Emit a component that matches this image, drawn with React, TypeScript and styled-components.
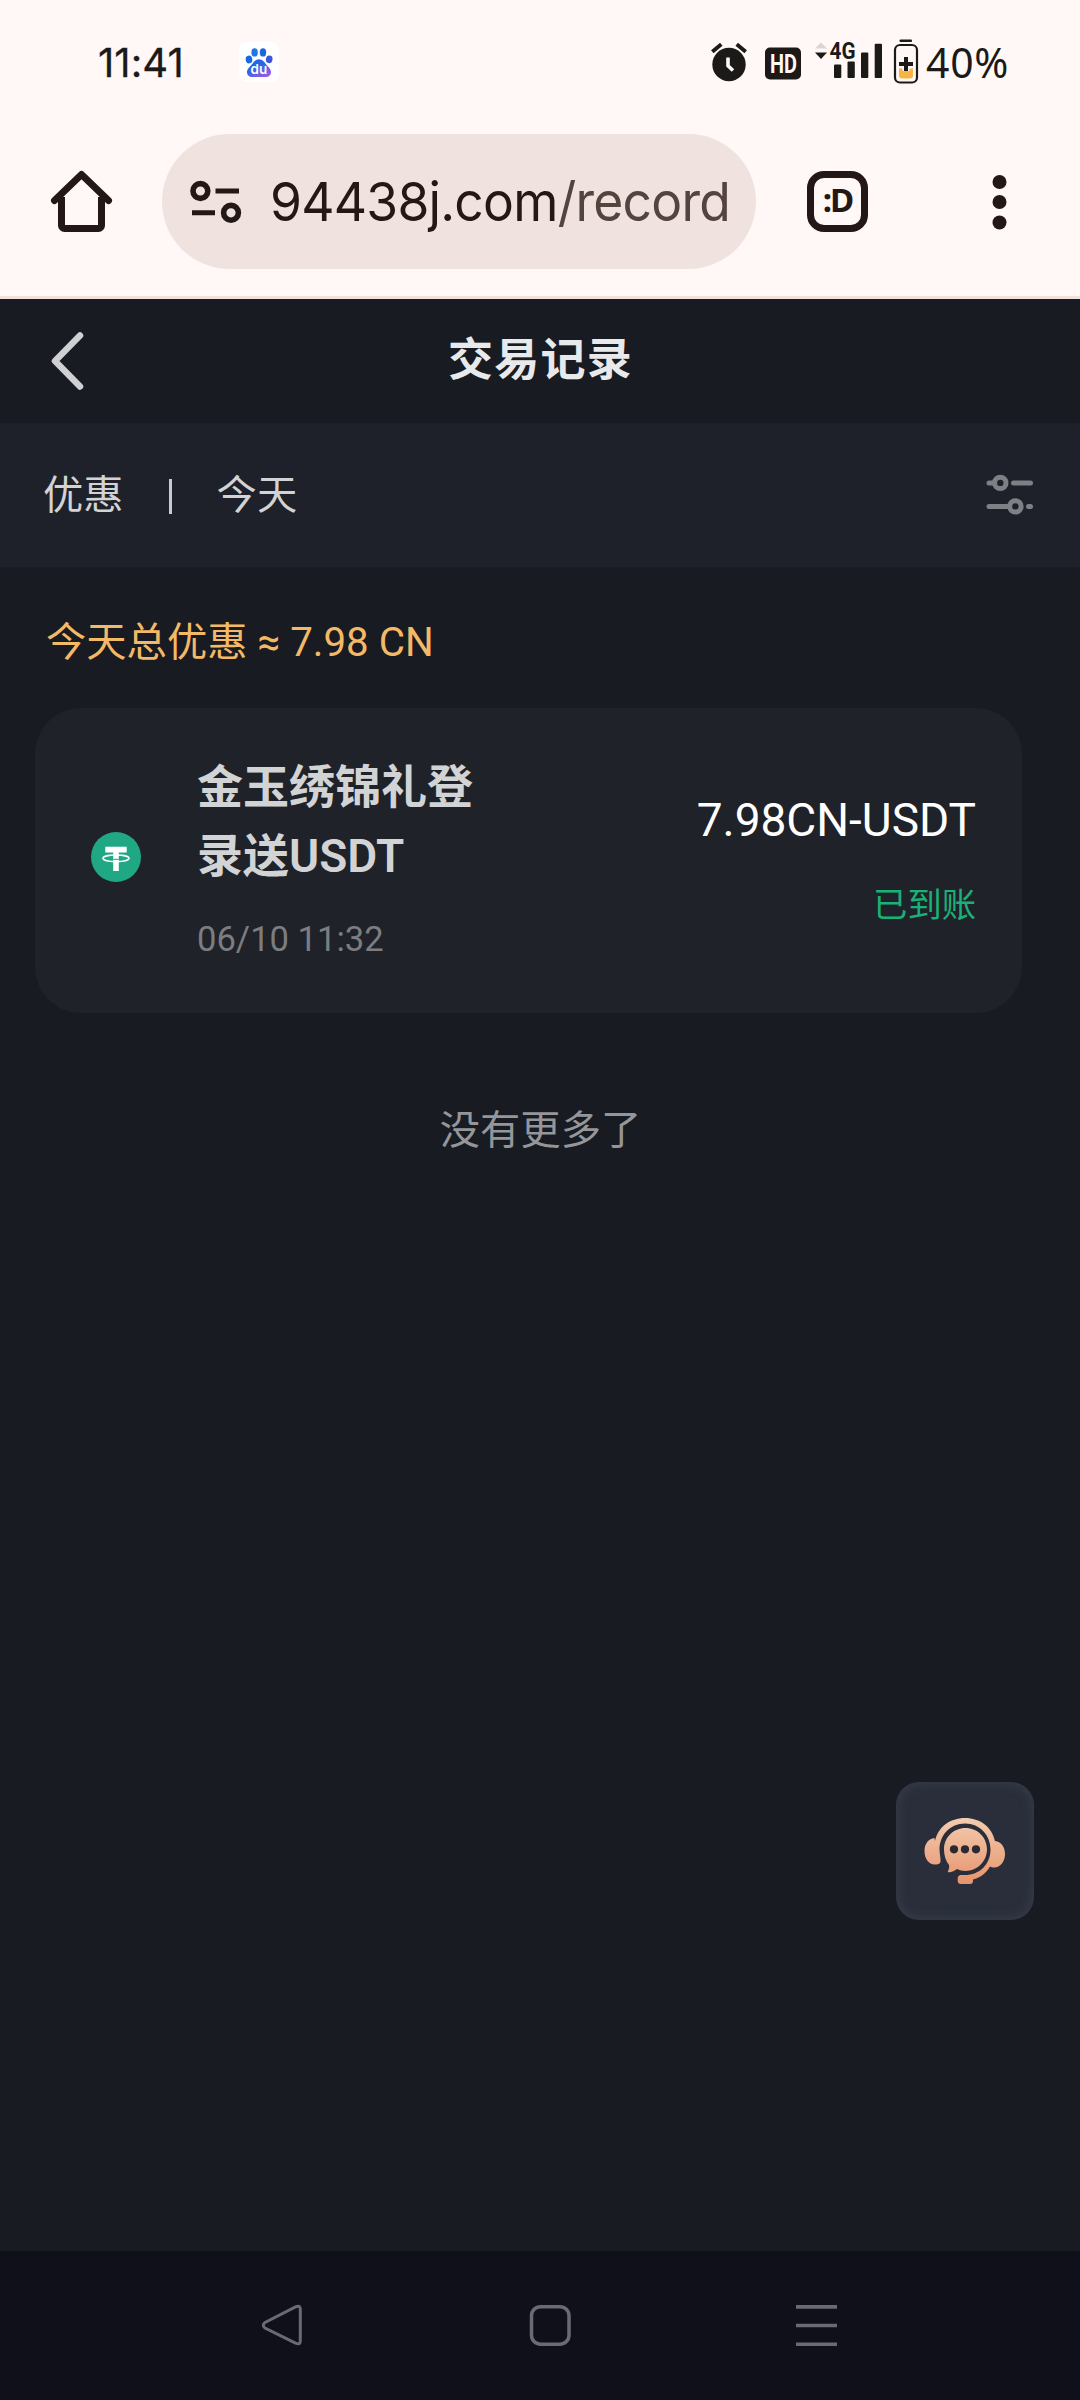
import React from 'react';
import styled, { createGlobalStyle } from 'styled-components';

const GlobalStyle = createGlobalStyle`
  * { box-sizing: border-box; }
  html, body { margin: 0; padding: 0; background: #181b22; }
  body { font-family: Roboto, "Noto Sans CJK SC", sans-serif; }
  svg { display: block; flex: none; }
`;

const ink = '#1b1a19';
const brown = '#231816';

const Screen = styled.div`
  width: 1080px;
  height: 2400px;
  display: flex;
  flex-direction: column;
  background: #181b22;
  overflow: hidden;
`;

const StatusBar = styled.header`
  height: 124px;
  display: flex;
  align-items: center;
  padding: 0 71px 0 97px;
  background: #fff8f6;
  color: ${ink};
`;

const Clock = styled.time`
  width: 142px;
  padding: 2px 0 0 1px;
  font: 400 40px/50px Inter, sans-serif;
  letter-spacing: 0.1px;
  -webkit-text-stroke: 0.3px ${ink};
`;

const StatusIcons = styled.div`
  margin-left: auto;
  display: flex;
  align-items: center;
`;

const BatteryText = styled.span`
  width: 90px;
  padding-left: 7px;
  white-space: nowrap;
  font: 400 41px/50px "Noto Sans", sans-serif;
  letter-spacing: 0.7px;
`;

const Toolbar = styled.div`
  height: 175px;
  display: flex;
  align-items: flex-start;
  padding: 10px 0 0 50px;
  background: #fff8f6;
  border-bottom: 3px solid #f0e1dd;
`;

const ToolIcon = styled.div<{ $left?: number }>`
  height: 135px;
  margin-left: ${p => p.$left ?? 0}px;
  display: flex;
  align-items: center;
`;

const AddressBar = styled.div`
  width: 594px;
  height: 135px;
  margin-left: 49px;
  padding-left: 27px;
  border-radius: 68px;
  display: flex;
  align-items: center;
  background: #f0e3df;
`;

const Url = styled.span`
  margin-left: 26px;
  white-space: nowrap;
  font: 400 54px/66px Inter, sans-serif;
  letter-spacing: -0.8px;
  color: ${brown};
  transform: scaleX(0.955);
  transform-origin: left center;
`;

const UrlPath = styled.span`
  color: #54433f;
`;

const TabCount = styled.div`
  width: 61px;
  height: 61px;
  padding-bottom: 3px;
  border: 7px solid ${brown};
  border-radius: 17px;
  display: flex;
  align-items: center;
  justify-content: center;
  font: 700 33px/40px "Noto Sans", sans-serif;
  letter-spacing: -2px;
  color: ${brown};
`;

const PageHeader = styled.div`
  height: 124px;
  display: grid;
  grid-template-columns: 100px 1fr 100px;
  align-items: center;
  padding-bottom: 1px;
`;

const BackButton = styled.div`
  padding-left: 50px;
`;

const Title = styled.h1`
  margin: 0;
  padding-left: 1px;
  text-align: center;
  font-size: 45px;
  line-height: 60px;
  font-weight: 700;
  letter-spacing: 1.2px;
  color: #e8e9ea;
`;

const FilterBar = styled.div`
  height: 144px;
  display: flex;
  align-items: center;
  padding: 0 46px 0 43px;
  background: #1e2129;
  font-size: 40.300px;
  line-height: 56px;
  color: #d2d3d4;
`;

const FilterLabel = styled.span`
  padding-top: 2px;
`;

const FilterDivider = styled.i`
  width: 3px;
  height: 35px;
  margin: 2px 45px 0 45px;
  background: #c9cacb;
`;

const FilterButton = styled.div`
  margin-left: auto;
`;

const Content = styled.main`
  flex: 1;
  padding: 46px 58px 0 35px;
`;

const Summary = styled.p`
  margin: 0 0 35px;
  padding-left: 11px;
  font-size: 40.300px;
  line-height: 60px;
  color: #f3b966;
  white-space: nowrap;
`;

const RecordCard = styled.article`
  height: 305px;
  border-radius: 46px;
  background: #1f2229;
  display: flex;
  align-items: center;
  padding: 0 46px 7px 56px;
`;

const RecordInfo = styled.div`
  width: 290px;
  margin-left: 56px;
  padding-bottom: 2px;
`;

const RecordName = styled.div`
  font-size: 46px;
  line-height: 69px;
  font-weight: 600;
  color: #d2d3d5;
`;

const RecordTime = styled.div`
  margin-top: 28px;
  font-size: 34.600px;
  line-height: 40px;
  color: #7c7d80;
`;

const RecordResult = styled.div`
  margin-left: auto;
  text-align: right;
  padding-top: 5px;
`;

const Amount = styled.div`
  font-size: 46px;
  line-height: 60px;
  color: #fff;
`;

const State = styled.div`
  margin-top: 31px;
  font-size: 34.300px;
  line-height: 48px;
  color: #1bb077;
`;

const EndNote = styled.p`
  margin: 88px 0 0;
  padding-left: 24px;
  text-align: center;
  font-size: 40.300px;
  line-height: 60px;
  color: #94969a;
`;

const SupportButton = styled.div`
  position: fixed;
  left: 896px;
  top: 1782px;
  width: 138px;
  height: 138px;
  border-radius: 23px;
  background: #292e3a;
  box-shadow: inset 0 0 14px rgba(112, 116, 132, 0.26);
  display: flex;
  align-items: center;
  justify-content: center;
`;

const NavBar = styled.nav`
  height: 149px;
  display: flex;
  align-items: flex-start;
  justify-content: space-between;
  padding: 52px 241px 0 260px;
  background: #10101a;
`;

const BaiduBadge = () => (
  <svg width="40" height="40" viewBox="0 0 40 40">
    <defs>
      <linearGradient id="paw" x1="0" y1="0" x2="0.7" y2="1">
        <stop offset="0.45" stopColor="#2368e8" />
        <stop offset="1" stopColor="#9a5ae6" />
      </linearGradient>
    </defs>
    <rect width="40" height="40" rx="8" fill="#fff" />
    <ellipse cx="10" cy="17.500" rx="3.300" ry="3.900" fill="#1769e0" transform="rotate(-12 10 17.500)" />
    <ellipse cx="15.600" cy="10.400" rx="3.200" ry="4.200" fill="#1d78e8" />
    <ellipse cx="24" cy="10.400" rx="3.200" ry="4.200" fill="#1d66e0" />
    <ellipse cx="30.200" cy="17.300" rx="3.300" ry="3.900" fill="#3a57dc" transform="rotate(12 30.200 17.300)" />
    <path d="M20 17.200c3.300 0 5 2.300 7 5 2.200 2.700 5 4.500 5 8 0 3.200-2.600 4.800-5.500 4.800H13.500C10.600 35 8 33.400 8 30.200c0-3.500 2.800-5.300 5-8 2-2.700 3.700-5 7-5z" fill="url(#paw)" />
    <text x="11.600" y="32" fill="#fff" fontFamily="Inter, sans-serif" fontSize="13.500" fontWeight="600">du</text>
  </svg>
);

const StatusGlyphs = () => (
  <svg width="210" height="50" viewBox="709 37.500 210 50">
    <circle cx="729" cy="65" r="16.700" fill={ink} />
    <path d="M712.300 52.300l9-7.600M745.700 52.300l-9-7.600" stroke={ink} strokeWidth="3.800" />
    <path d="M728 58v8.300l5 4.700" stroke="#fff8f6" strokeWidth="3.600" fill="none" />
    <rect x="765" y="48" width="36" height="32" rx="5" fill={ink} />
    <text x="770" y="73" fontFamily="Roboto, sans-serif" fontWeight="700" fontSize="25" textLength="27" lengthAdjust="spacingAndGlyphs" fill="#fff8f6">HD</text>
    <path d="M815 49l6-6 6 6z" fill="#dcd5d3" />
    <path d="M815 53h12l-6 6.500z" fill={ink} />
    <text x="829.500" y="59.500" fontFamily="Roboto, sans-serif" fontWeight="700" fontSize="23.500" textLength="26" lengthAdjust="spacingAndGlyphs" fill={ink}>4G</text>
    <g fill={ink}>
      <rect x="834" y="65" width="7.300" height="13.500" rx="1" />
      <rect x="847.500" y="62" width="7.300" height="16.500" rx="1" />
      <rect x="861" y="53" width="7.300" height="25.500" rx="1" />
      <rect x="874.700" y="44.300" width="7.300" height="34.200" rx="1" />
      <rect x="899.500" y="40" width="12.500" height="2.600" rx="1" />
    </g>
    <rect x="895" y="45.500" width="22" height="37.500" rx="5" fill="#fff8f6" stroke={ink} strokeWidth="2.200" />
    <path d="M899 69h14v7a3 3 0 0 1-3 3h-8a3 3 0 0 1-3-3z" fill="#f6b545" />
    <path d="M899 64.500h14M906 57.500v14" stroke="#fff8f6" strokeWidth="7" />
    <path d="M899 64.500h14M906 57.500v14" stroke={ink} strokeWidth="4" />
  </svg>
);

const HomeIcon = () => (
  <svg width="63" height="63" viewBox="50 170 63 63" fill="none" stroke={brown} strokeWidth="7">
    <path d="M61.500 197v28.500a3 3 0 0 0 3 3h34a3 3 0 0 0 3-3V197" />
    <path d="M54.500 200.500L81.500 174.500l27 26" strokeLinecap="round" strokeLinejoin="round" />
  </svg>
);

const SiteIcon = () => (
  <svg width="55" height="46" viewBox="189 178.500 55 46" fill="none" stroke={brown}>
    <g strokeWidth="5.600">
      <circle cx="200.400" cy="190.500" r="7.400" />
      <circle cx="231" cy="212.300" r="7.400" />
    </g>
    <path d="M215.500 190.500H239M192 212.300h23" strokeWidth="5" />
  </svg>
);

const MenuDots = () => (
  <svg width="16" height="58" viewBox="0 0 16 58" fill={brown}>
    <circle cx="8.500" cy="9" r="7" />
    <circle cx="8.500" cy="29" r="7" />
    <circle cx="8.500" cy="49.500" r="7" />
  </svg>
);

const BackIcon = () => (
  <svg width="36" height="60" viewBox="0 0 36 60" fill="none" stroke="#cfd0d2" strokeWidth="6.500" strokeLinecap="round" strokeLinejoin="round">
    <path d="M30 4.500L5 30l25 25.500" />
  </svg>
);

const SlidersIcon = () => (
  <svg width="48" height="42" viewBox="986 473.500 48 42" fill="none" stroke="#7e8085" strokeWidth="5" strokeLinecap="round">
    <path d="M989 482.400h4M1013.500 482.400h17M989 505.900h19M1028.500 505.900h2" />
    <circle cx="1000.300" cy="482.400" r="5.700" />
    <circle cx="1015.400" cy="505.900" r="5.700" />
  </svg>
);

const TetherIcon = () => (
  <svg width="50" height="50" viewBox="0 0 50 50">
    <circle cx="25" cy="25" r="25" fill="#20a884" />
    <path d="M14.300 14.800h21.400v5.700h-7.900V39h-5.600V20.500h-7.900z" fill="#fff" />
    <ellipse cx="25" cy="26.300" rx="13" ry="3.300" fill="none" stroke="#fff" strokeWidth="1.500" />
    <path d="M22.200 27.300h5.600" stroke="#20a884" strokeWidth="1" />
  </svg>
);

const SupportIcon = () => (
  <svg width="84" height="70" viewBox="923 1816 84 70">
    <defs>
      <linearGradient id="peach" x1="0" y1="1818" x2="0" y2="1884" gradientUnits="userSpaceOnUse">
        <stop stopColor="#f3ccaf" />
        <stop offset="1" stopColor="#e6936c" />
      </linearGradient>
    </defs>
    <g fill="url(#peach)">
      <path d="M935 1841C938 1827 950 1818 965 1818s27 9 30 23c6 .500 10 6 10 13 0 8-5 13.500-10.500 13.500-2 0-3.500-.400-4.500-1-4 7-10 11.500-17 13v1.500c0 2-1 3-3 3h-9c-2 0-3.300-1-3.300-3v-2.500c0-2 1.300-3.500 3.300-3.500h4c14.500 0 25.500-10.500 25.500-25.500 0-14-10.500-26-25.500-26s-25.500 12-25.500 26c0 5 1.500 9 1 12.500-.300 1.900-3 2.500-6 2.500-5.500 0-10-5.500-10-13.500 0-7 4-12.500 10-13z" />
      <path d="M965.500 1828c12 0 21.500 9.400 21.500 21.300s-9.500 21.700-21.500 21.700c-3.400 0-6-.700-8.500-1.900-2.500 2-5.500 3.300-8.500 3.100-.800-.200-.700-1.200-.300-1.700 1-1.500 1.200-3.400.800-5.500-3.200-4-5-9.500-5-15.700 0-11.900 9.500-21.300 21.500-21.300z" />
    </g>
    <g fill="#2b2a33">
      <circle cx="954" cy="1849.300" r="4.100" />
      <circle cx="965" cy="1849.300" r="4.100" />
      <circle cx="976" cy="1849.300" r="4.100" />
    </g>
  </svg>
);

const NavBack = () => (
  <svg width="44" height="44" viewBox="260 2303 44 44" fill="none" stroke="#6b6a73" strokeWidth="3">
    <path d="M265 2322.500L295.500 2306.800Q300.300 2304.800 300.300 2309v32Q300.300 2345.200 295.500 2343.200L265 2328Q261.500 2325.200 265 2322.500z" />
  </svg>
);

const NavHome = () => (
  <svg width="44" height="44" viewBox="0 0 44 44" fill="none" stroke="#6b6a73" strokeWidth="3.500">
    <rect x="3.500" y="3.700" width="37.500" height="37.500" rx="9" />
  </svg>
);

const NavRecent = () => (
  <svg width="43" height="44" viewBox="0 0 43 44" stroke="#6b6a73" strokeWidth="3.600">
    <path d="M0 3.900h41M0 22.500h41M0 41.200h41" />
  </svg>
);

export default function App() {
  return (
    <Screen>
      <GlobalStyle />
      <StatusBar>
        <Clock>11:41</Clock>
        <BaiduBadge />
        <StatusIcons>
          <StatusGlyphs />
          <BatteryText>40%</BatteryText>
        </StatusIcons>
      </StatusBar>
      <Toolbar>
        <ToolIcon><HomeIcon /></ToolIcon>
        <AddressBar>
          <SiteIcon />
          <Url>94438j.com<UrlPath>/record</UrlPath></Url>
        </AddressBar>
        <ToolIcon $left={51}><TabCount>:D</TabCount></ToolIcon>
        <ToolIcon $left={123}><MenuDots /></ToolIcon>
      </Toolbar>
      <PageHeader>
        <BackButton><BackIcon /></BackButton>
        <Title>交易记录</Title>
      </PageHeader>
      <FilterBar>
        <FilterLabel>优惠</FilterLabel>
        <FilterDivider />
        <FilterLabel>今天</FilterLabel>
        <FilterButton><SlidersIcon /></FilterButton>
      </FilterBar>
      <Content>
        <Summary>今天总优惠 ≈ 7.98 CN</Summary>
        <RecordCard>
          <TetherIcon />
          <RecordInfo>
            <RecordName>金玉绣锦礼登录送USDT</RecordName>
            <RecordTime>06/10 11:32</RecordTime>
          </RecordInfo>
          <RecordResult>
            <Amount>7.98CN-USDT</Amount>
            <State>已到账</State>
          </RecordResult>
        </RecordCard>
        <EndNote>没有更多了</EndNote>
      </Content>
      <NavBar>
        <NavBack />
        <NavHome />
        <NavRecent />
      </NavBar>
      <SupportButton><SupportIcon /></SupportButton>
    </Screen>
  );
}
